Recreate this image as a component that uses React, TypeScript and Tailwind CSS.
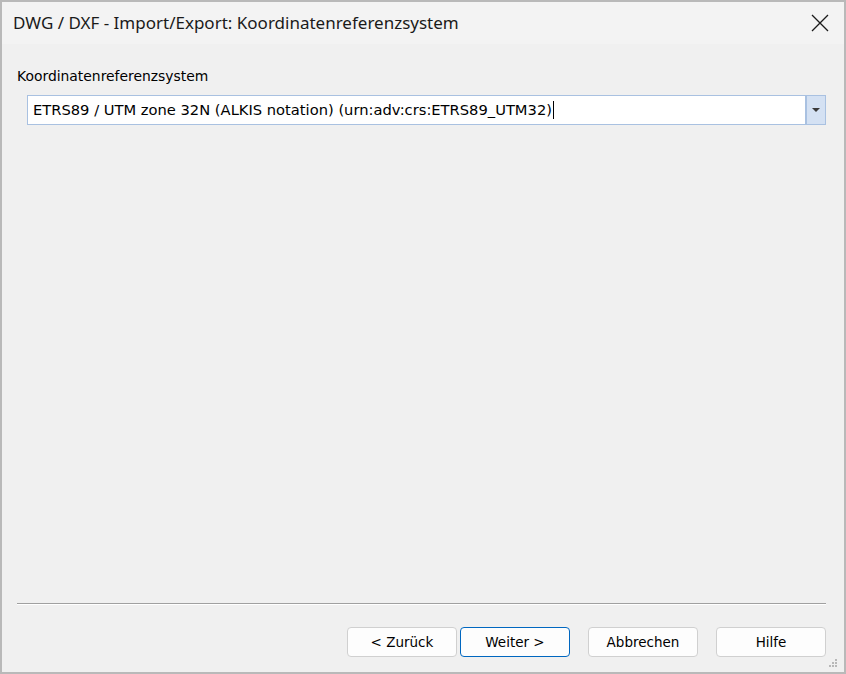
import React from "react";

const ui = { fontFamily: '"Noto Sans", "Open Sans", sans-serif' };
const tah = { fontFamily: '"DejaVu Sans", "Liberation Sans", sans-serif' };

function Btn({ label, primary }: { label: string; primary?: boolean }) {
  return (
    <div
      className={
        "w-[110px] h-[30px] flex items-center justify-center rounded-[4px] bg-[#fdfdfd] text-[13.5px] text-black border " +
        (primary ? "border-[#0067c0]" : "border-[#d0d0d0]")
      }
      style={tah}
    >
      {label}
    </div>
  );
}

export default function App() {
  return (
    <div className="w-[846px] h-[674px] bg-[#b9b9b9] p-[2px] pt-[2px]">
      <div className="w-full h-full flex flex-col bg-[#f0f0f0]">
        <div className="h-[42px] bg-[#f3f3f3] flex items-center justify-between pl-[11px] pr-[15px]">
          <span className="text-[17px] text-[#1a1a1a]" style={ui}>
            DWG / DXF - Import/Export: Koordinatenreferenzsystem
          </span>
          <svg width="18" height="18" viewBox="0 0 18 18">
            <path d="M1 1 L17 17 M17 1 L1 17" stroke="#1a1a1a" strokeWidth="1.3" fill="none" />
          </svg>
        </div>
        <div className="flex-1 flex flex-col pl-[15px] pr-[18px] pt-[24px] relative">
          <div className="text-[13.9px] text-black leading-[16px]" style={tah}>
            Koordinatenreferenzsystem
          </div>
          <div className="ml-[10px] mt-[11px] h-[30px] bg-white border border-[#a9c1e1] flex items-stretch">
            <div className="flex-1 flex items-center pl-[5px] text-[14.7px] text-black" style={tah}>
              ETRS89 / UTM zone 32N (ALKIS notation) (urn:adv:crs:ETRS89_UTM32)
              <span className="inline-block w-[1px] h-[18px] bg-black ml-[1px]" />
            </div>
            <div className="w-[20px] bg-[#d4e1f3] border-l-[2px] border-[#a9c1e1] flex items-center justify-center">
              <svg width="8" height="4" viewBox="0 0 8 4">
                <path d="M0 0 L8 0 L4 4 Z" fill="#3a3a3a" />
              </svg>
            </div>
          </div>
          <div className="flex-1" />
          <div className="h-[1px] bg-[#a0a0a0]" />
          <div className="h-[1px] bg-white" />
          <div className="flex justify-end mt-[22px] mb-[15px]">
            <div className="flex gap-[3px]">
              <Btn label="< Zurück" />
              <Btn label="Weiter >" primary />
            </div>
            <div className="ml-[18px]">
              <Btn label="Abbrechen" />
            </div>
            <div className="ml-[18px]">
              <Btn label="Hilfe" />
            </div>
          </div>
          <svg className="absolute right-[6px] bottom-[4px]" width="10" height="10" viewBox="0 0 10 10">
            <rect x="7" y="1" width="2" height="2" fill="#b8b8b8" />
            <rect x="4" y="4" width="2" height="2" fill="#b8b8b8" />
            <rect x="7" y="4" width="2" height="2" fill="#b8b8b8" />
            <rect x="1" y="7" width="2" height="2" fill="#b8b8b8" />
            <rect x="4" y="7" width="2" height="2" fill="#b8b8b8" />
            <rect x="7" y="7" width="2" height="2" fill="#b8b8b8" />
          </svg>
        </div>
      </div>
    </div>
  );
}
